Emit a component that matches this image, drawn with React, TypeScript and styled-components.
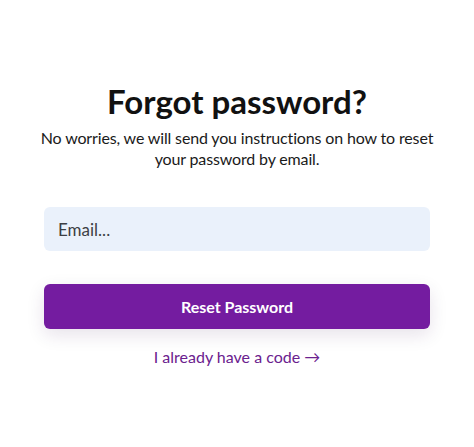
import React from 'react';
import styled, { createGlobalStyle } from 'styled-components';

const GlobalStyle = createGlobalStyle`
  html, body {
    margin: 0;
    padding: 0;
    background: #ffffff;
  }
  body {
    font-family: Lato, 'Noto Sans', sans-serif;
  }
`;

const Page = styled.div`
  width: 474px;
  height: 447px;
  display: flex;
  justify-content: center;
  background: #ffffff;
`;

const Card = styled.div`
  width: 386px;
  display: flex;
  flex-direction: column;
  align-items: center;
  padding-top: 81px;
`;

const Title = styled.h1`
  margin: 0;
  font-size: 33px;
  line-height: 40px;
  font-weight: 700;
  color: #111111;
  letter-spacing: 0;
`;

const Subtitle = styled.p`
  margin: 6px 0 0;
  font-size: 16px;
  line-height: 21px;
  color: #1a1a1a;
  text-align: center;
  white-space: nowrap;
  letter-spacing: -0.15px;
`;

const EmailInput = styled.input`
  box-sizing: border-box;
  width: 100%;
  height: 44px;
  margin-top: 38px;
  padding: 0 14px;
  border: none;
  border-radius: 6px;
  background: #eaf1fb;
  font-family: inherit;
  font-size: 17px;
  color: #333;
  outline: none;

  &::placeholder {
    color: #3d3f44;
  }
`;

const ResetButton = styled.button`
  box-sizing: border-box;
  width: 100%;
  height: 45px;
  margin-top: 33px;
  border: none;
  border-radius: 6px;
  background: #741ca0;
  color: #ffffff;
  font-family: inherit;
  font-size: 16px;
  font-weight: 700;
  box-shadow: 0 6px 18px rgba(60, 20, 80, 0.12);
  cursor: pointer;
`;

const CodeLink = styled.a`
  margin-top: 17px;
  font-size: 16px;
  line-height: 22px;
  color: #6b218e;
  text-decoration: none;
  cursor: pointer;
`;

export default function App(): JSX.Element {
  return (
    <>
      <GlobalStyle />
      <Page>
        <Card>
          <Title>Forgot password?</Title>
          <Subtitle>
            No worries, we will send you instructions on how to reset
            <br />
            your password by email.
          </Subtitle>
          <EmailInput type="email" placeholder="Email..." />
          <ResetButton type="button">Reset Password</ResetButton>
          <CodeLink>I already have a code →</CodeLink>
        </Card>
      </Page>
    </>
  );
}
